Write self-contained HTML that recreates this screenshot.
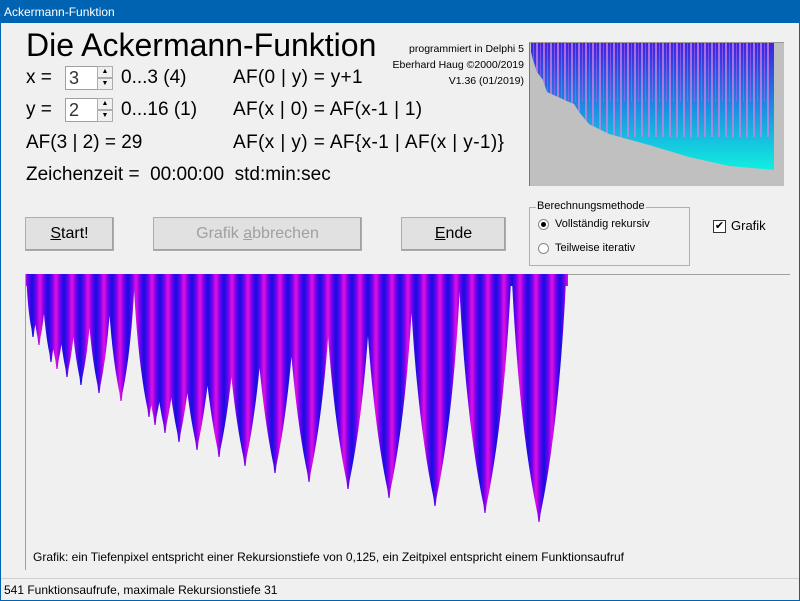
<!DOCTYPE html>
<html><head><meta charset="utf-8"><style>
*{margin:0;padding:0;box-sizing:border-box}
body{width:800px;height:601px;background:#f0f0f0;font-family:"Liberation Sans",sans-serif;position:relative;overflow:hidden;color:#000}
.abs{position:absolute;white-space:nowrap}
.title{left:0;top:0;width:800px;height:23px;background:#0063b1;color:#fff;font-size:12px;padding:5px 0 0 4px}
.frame{left:0;top:0;width:800px;height:601px;border:1px solid #0063b1;border-top:none}
.big{font-size:19px}
.spin{width:33px;height:24px;background:#fff;border:1px solid #a0a0a0;border-right:none;font-size:18px;padding:1px 0 0 3px;color:#333}
.arr{width:16px;height:12px;background:#f0f0f0;border:1px solid #adadad;font-size:7px;text-align:center;line-height:10px}
.btn{height:34px;border:1px solid #adadad;background:#e1e1e1;box-shadow:inset -1px -1px #a0a0a0;font-size:16px;text-align:center;line-height:32px}
.small{font-size:12px}
</style></head><body>
<div class="abs title">Ackermann-Funktion</div>
<div class="abs" style="left:26px;top:27px;font-size:32px">Die Ackermann-Funktion</div>
<div class="abs" style="left:363px;top:41px;width:161px;text-align:right;line-height:16px;font-size:10.5px">programmiert in Delphi 5<br>Eberhard Haug ©2000/2019<br>V1.36 (01/2019)</div>

<div class="abs big" style="left:26px;top:67px">x =</div>
<div class="abs spin" style="left:65px;top:66px">3</div>
<div class="abs arr" style="left:97px;top:66px">▲</div><div class="abs arr" style="left:97px;top:78px">▼</div>
<div class="abs big" style="left:121px;top:67px">0...3 (4)</div>
<div class="abs big" style="left:26px;top:99px">y =</div>
<div class="abs spin" style="left:65px;top:98px">2</div>
<div class="abs arr" style="left:97px;top:98px">▲</div><div class="abs arr" style="left:97px;top:110px">▼</div>
<div class="abs big" style="left:121px;top:99px">0...16 (1)</div>
<div class="abs big" style="left:26px;top:132px">AF(3 | 2) = 29</div>
<div class="abs big" style="left:233px;top:67px;letter-spacing:0.3px">AF(0 | y) = y+1</div>
<div class="abs big" style="left:233px;top:99px;letter-spacing:0.3px">AF(x | 0) = AF(x-1 | 1)</div>
<div class="abs big" style="left:233px;top:132px;letter-spacing:0.4px">AF(x | y) = AF{x-1 | AF(x | y-1)}</div>
<div class="abs big" style="left:26px;top:164px">Zeichenzeit =&nbsp; 00:00:00&nbsp; std:min:sec</div>

<svg class="abs" style="left:529px;top:42px" width="255" height="144">
<defs><linearGradient id="g2" x1="0" y1="0" x2="0" y2="1"><stop offset="0" stop-color="#4020e0"/><stop offset=".45" stop-color="#2080e0"/><stop offset="1" stop-color="#10f0e0"/></linearGradient>
<pattern id="st" width="7" height="144" patternUnits="userSpaceOnUse"><rect x="0" width="2" height="95" fill="#d080e0" opacity=".75"/><rect x="4" width="1" height="60" fill="#b060f0" opacity=".6"/></pattern></defs>
<rect width="255" height="144" fill="#c0c0c0"/>
<path d="M2 0 L245 0 L245 128 L200 124 L160 115 L120 103 L80 92 L60 82 L50 70 L45 62 L40 60 L18 50 L14 38 L8 30 L4 18 L2 10 Z" fill="url(#g2)"/>
<path d="M2 0 L240 0 L240 128 L200 124 L160 115 L120 103 L80 92 L60 82 L50 70 L45 62 L40 60 L18 50 L14 38 L8 30 L4 18 L2 10 Z" fill="url(#st)"/>
<rect x="0" y="0" width="1" height="144" fill="#777"/>
<rect x="0" y="0" width="255" height="1" fill="#999"/>
</svg>

<div class="abs btn" style="left:25px;top:217px;width:89px"><u>S</u>tart!</div>
<div class="abs btn" style="left:153px;top:217px;width:209px;color:#a0a0a0">Grafik <u>a</u>bbrechen</div>
<div class="abs btn" style="left:401px;top:217px;width:105px"><u>E</u>nde</div>

<div class="abs" style="left:529px;top:207px;width:161px;height:59px;border:1px solid #b0b0b0"></div>
<div class="abs small" style="left:536px;top:200px;background:#f0f0f0;padding:0 1px;font-size:11px">Berechnungsmethode</div>
<div class="abs" style="left:538px;top:219px;width:11px;height:11px;border-radius:50%;background:#fff;border:1px solid #888"><div style="width:5px;height:5px;border-radius:50%;background:#000;margin:2px"></div></div>
<div class="abs small" style="left:555px;top:218px;font-size:11px">Vollständig rekursiv</div>
<div class="abs" style="left:538px;top:243px;width:11px;height:11px;border-radius:50%;background:#fff;border:1px solid #888"></div>
<div class="abs small" style="left:555px;top:242px;font-size:11px">Teilweise iterativ</div>
<div class="abs" style="left:713px;top:220px;width:13px;height:13px;background:#fff;border:1px solid #333;font-size:11px;line-height:11px;text-align:center">✔</div>
<div class="abs" style="left:731px;top:218px;font-size:13px">Grafik</div>

<svg class="abs" style="left:0;top:0" width="800" height="601">
<defs><linearGradient id="g1" x1="0" y1="0" x2="8" y2="0" gradientUnits="userSpaceOnUse" spreadMethod="reflect"><stop offset="0" stop-color="#1010e0"/><stop offset=".5" stop-color="#7000f0"/><stop offset="1" stop-color="#e010e0"/></linearGradient></defs>
<g fill="url(#g1)" id="tri"></g>
<line x1="25.5" y1="274" x2="25.5" y2="570" stroke="#a0a0a0"/>
<line x1="568" y1="274.5" x2="790" y2="274.5" stroke="#a0a0a0"/>
</svg>
<script>
var t=[[33,337],[39,345],[51,362],[57,369],[67,377],[81,385],[99,393],[121,401],[149,417],[155,425],[165,433],[179,442],[197,450],[219,457],[245,466],[275,473],[309,482],[348,489],[389,498],[435,506],[485,513],[539,522]];
var s='<rect x="26" y="274" width="542" height="12"/>';
for(var i=0;i<t.length;i++){var x=t[i][0],y=t[i][1],d=y-274,h=Math.max(5,d*0.11);
var l=Math.max(26,x-h),r=Math.min(568,x+h);
s+='<path d="M'+l+' 274 L'+r+' 274 Q'+(x+h*0.75)+' '+(274+d*0.6)+' '+(x+1.5)+' '+(y-8)+' L'+(x+0.6)+' '+y+' L'+(x-0.6)+' '+y+' L'+(x-1.5)+' '+(y-8)+' Q'+(x-h*0.75)+' '+(274+d*0.6)+' '+l+' 274Z"/>';}
document.getElementById('tri').innerHTML=s;
</script>
<div class="abs small" style="left:33px;top:550px">Grafik: ein Tiefenpixel entspricht einer Rekursionstiefe von 0,125, ein Zeitpixel entspricht einem Funktionsaufruf</div>
<div class="abs" style="left:0;top:578px;width:800px;height:1px;background:#d0d0d0"></div>
<div class="abs small" style="left:4px;top:583px">541 Funktionsaufrufe, maximale Rekursionstiefe 31</div>
<div class="abs frame"></div>
</body></html>
